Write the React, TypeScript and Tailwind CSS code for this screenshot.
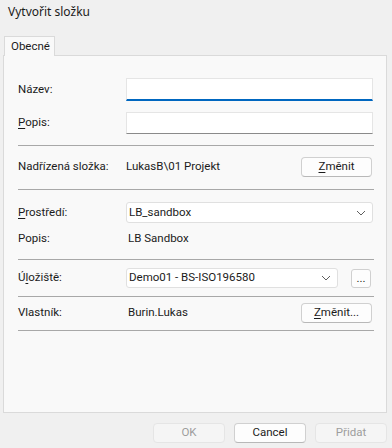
import React from "react";

function Chevron() {
	return (
		<svg width="10" height="6" viewBox="0 0 10 6" className="text-[#5f5f5f]">
			<path d="M1 1l4 4 4-4" fill="none" stroke="currentColor" strokeWidth="1" />
		</svg>
	);
}

function Btn({ children, disabled, w = "w-[71px]" }: { children: React.ReactNode; disabled?: boolean; w?: string }) {
	return (
		<button
			type="button"
			className={
				disabled
					? `${w} h-[20px] rounded-[4px] border border-[#e5e5e5] bg-[#f5f5f5] text-[#9d9d9d] leading-none`
					: `${w} h-[20px] rounded-[4px] border border-[#d0d0d0] border-b-[#b8b8b8] bg-[#fdfdfd] text-[#1b1b1b] leading-none`
			}
		>
			{children}
		</button>
	);
}

function Sep() {
	return <div className="h-px bg-[#a8a8a8] mr-[12px]" />;
}

export default function App() {
	return (
		<div
			className="w-[392px] h-[448px] bg-[#f0f0f0] flex flex-col text-[11.5px] text-[#1b1b1b]"
			style={{ fontFamily: 'Roboto, "Noto Sans", sans-serif' }}
		>
			<div
				className="h-[36px] pl-[8px] pt-[3px] leading-[18px] text-[12px]"
				style={{ fontFamily: '"Noto Sans", sans-serif' }}
			>
				Vytvořit složku
			</div>

			<div className="flex">
				<div className="ml-[4px] w-[51px] h-[20px] border border-b-0 border-[#dadada] bg-[#f9f9f9] -mb-px relative z-10 pl-[6px] leading-[19px]">
					Obecné
				</div>
			</div>

			<div className="ml-[3px] w-[384px] h-[358px] border border-[#dadada] bg-[#f9f9f9] pl-[14px] pt-[22px]">
				<div className="flex items-center h-[23px]">
					<div className="w-[108px]">Název:</div>
					<div className="w-[247px] h-[23px] bg-white border border-[#e5e5e5] border-b-2 border-b-[#0067c0]" />
				</div>
				<div className="flex items-center h-[22px] mt-[11px]">
					<div className="w-[108px]">
						<span className="underline underline-offset-2">P</span>opis:
					</div>
					<div className="w-[247px] h-[22px] bg-white border border-[#e5e5e5] border-b-[#8a8a8a]" />
				</div>

				<div className="mt-[11px]">
					<Sep />
				</div>

				<div className="flex items-center h-[20px] mt-[11px]">
					<div className="w-[108px]">Nadřízená složka:</div>
					<div className="flex-1">LukasB\01 Projekt</div>
					<div className="mr-[14px]">
						<Btn>
							<span className="underline underline-offset-2">Z</span>měnit
						</Btn>
					</div>
				</div>

				<div className="mt-[12px]">
					<Sep />
				</div>

				<div className="flex items-center h-[21px] mt-[12px]">
					<div className="w-[108px]">
						<span className="underline underline-offset-2">P</span>rostředí:
					</div>
					<div className="w-[247px] h-[21px] bg-white border border-[#e0e0e0] rounded-[3px] flex items-center justify-between pl-[2px] pr-[6px]">
						<span>LB_sandbox</span>
						<Chevron />
					</div>
				</div>

				<div className="flex items-center h-[20px] mt-[6px]">
					<div className="w-[108px]">Popis:</div>
					<div className="pl-[2px]">LB Sandbox</div>
				</div>

				<div className="mt-[10px]">
					<Sep />
				</div>

				<div className="flex items-center h-[20px] mt-[8px]">
					<div className="w-[108px]">
						Ú<span className="underline underline-offset-2">l</span>ožiště:
					</div>
					<div className="w-[212px] h-[20px] bg-white border border-[#e0e0e0] rounded-[3px] flex items-center justify-between pl-[2px] pr-[6px]">
						<span>Demo01 - BS-ISO196580</span>
						<Chevron />
					</div>
					<div className="ml-[13px]">
						<button
							type="button"
							className="w-[20px] h-[19px] rounded-[3px] border border-[#d0d0d0] bg-[#fdfdfd] leading-[12px]"
						>
							...
						</button>
					</div>
				</div>

				<div className="mt-[8px]">
					<Sep />
				</div>

				<div className="flex items-center h-[20px] mt-[6px]">
					<div className="w-[108px]">Vlastník:</div>
					<div className="flex-1 pl-[2px]">Burin.Lukas</div>
					<div className="mr-[14px]">
						<Btn>
							<span className="underline underline-offset-2">Z</span>měnit...
						</Btn>
					</div>
				</div>

				<div className="mt-[7px]">
					<Sep />
				</div>
			</div>

			<div className="flex justify-end gap-[9px] pr-[5px] mt-[10px]">
				<Btn disabled w="w-[72px]">OK</Btn>
				<Btn w="w-[72px]">Cancel</Btn>
				<Btn disabled w="w-[72px]">Přidat</Btn>
			</div>
		</div>
	);
}
